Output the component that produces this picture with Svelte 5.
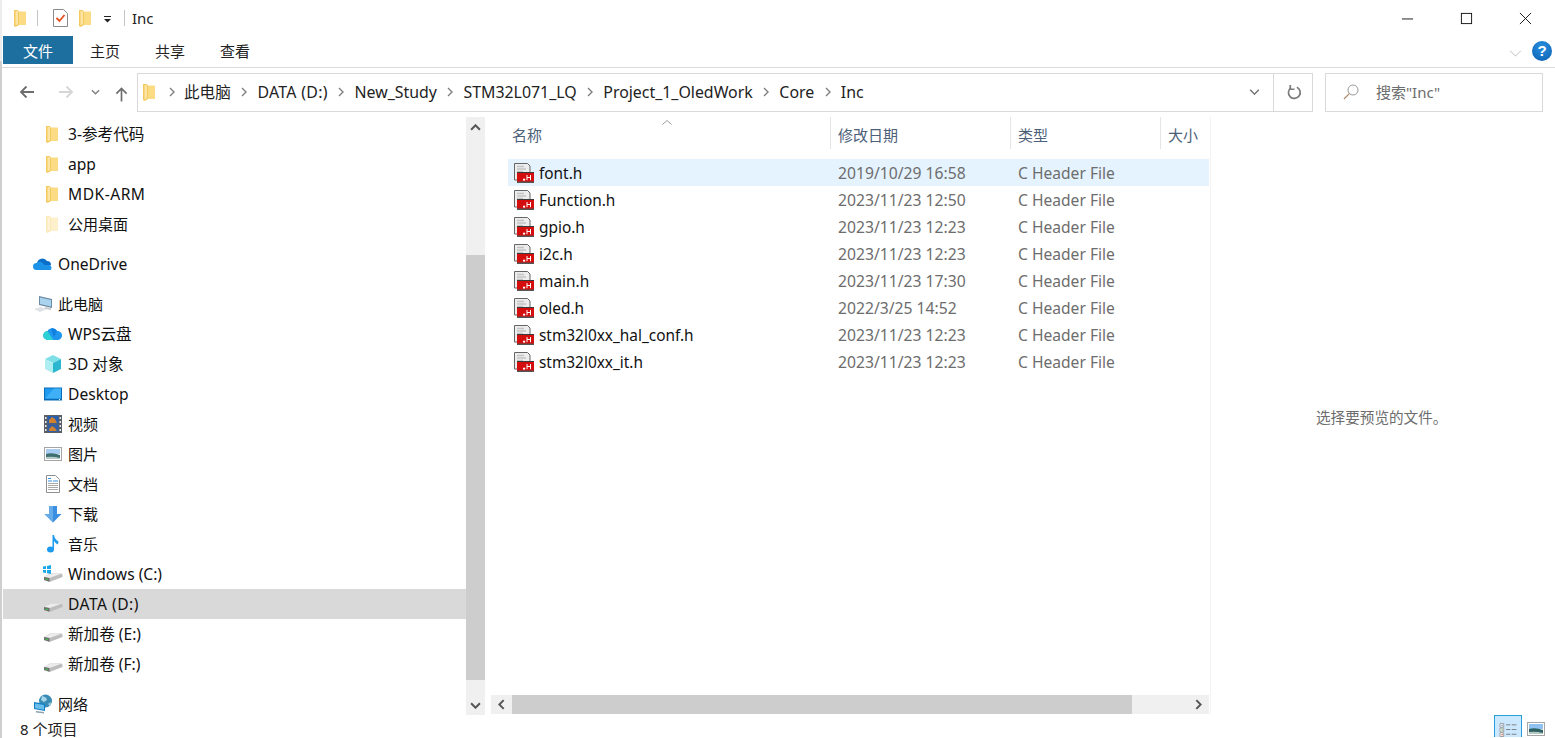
<script>
  const nav = [
    { t: '3-参考代码', i: 'folder', g: 'tree3' },
    { t: 'app', i: 'folder', g: 'tree3' },
    { t: 'MDK-ARM', i: 'folder', g: 'tree3' },
    { t: '公用桌面', i: 'folderPale', g: 'tree3' },
    { t: 'OneDrive', i: 'onedrive', g: 'top', gap: 10 },
    { t: '此电脑', i: 'pc', g: 'top', gap: 10 },
    { t: 'WPS云盘', i: 'wps', g: 'tree3' },
    { t: '3D 对象', i: 'cube', g: 'tree3' },
    { t: 'Desktop', i: 'desktop', g: 'tree3' },
    { t: '视频', i: 'video', g: 'tree3' },
    { t: '图片', i: 'picture', g: 'tree3' },
    { t: '文档', i: 'doc', g: 'tree3' },
    { t: '下载', i: 'download', g: 'tree3' },
    { t: '音乐', i: 'music', g: 'tree3' },
    { t: 'Windows (C:)', i: 'win', g: 'tree3' },
    { t: 'DATA (D:)', i: 'drive', g: 'tree3', sel: true },
    { t: '新加卷 (E:)', i: 'drive', g: 'tree3' },
    { t: '新加卷 (F:)', i: 'drive', g: 'tree3' },
    { t: '网络', i: 'net', g: 'top', gap: 10 }
  ];
  const files = [
    ['font.h', '2019/10/29 16:58'],
    ['Function.h', '2023/11/23 12:50'],
    ['gpio.h', '2023/11/23 12:23'],
    ['i2c.h', '2023/11/23 12:23'],
    ['main.h', '2023/11/23 17:30'],
    ['oled.h', '2022/3/25 14:52'],
    ['stm32l0xx_hal_conf.h', '2023/11/23 12:23'],
    ['stm32l0xx_it.h', '2023/11/23 12:23']
  ];
  const crumbs = ['此电脑', 'DATA (D:)', 'New_Study', 'STM32L071_LQ', 'Project_1_OledWork', 'Core', 'Inc'];
  const isCjk = (s) => /^[^\x00-\x7f]+$/.test(s);
  const hasCjk = (s) => /[^\x00-\x7f]/.test(s);
  const isWide = (s) => s === 'DATA (D:)' || s === 'MDK-ARM';
</script>

{#snippet folder(pale)}
  <svg class="ic16" viewBox="0 0 12 17" aria-hidden="true">
    <path d="M3 1.500h9V15H3z" fill={pale ? '#fdf0cb' : '#fbdc85'} />
    <path d="M0 0h3.500L5 1.500V15l-3.500 2L0 16z" fill={pale ? '#fbe8b8' : '#f4c95d'} />
    <path d="M1.500 1h2l.5.5V14l-2.500 1.500z" fill={pale ? '#fef3d6' : '#fde6a5'} />
  </svg>
{/snippet}

{#snippet icon(n)}
  {#if n === 'folder'}{@render folder(false)}
  {:else if n === 'folderPale'}{@render folder(true)}
  {:else if n === 'onedrive'}
    <svg class="ic20" viewBox="0 0 20 14" aria-hidden="true">
      <path d="M4 6a5.500 5.500 0 0 1 10-2 4 4 0 0 1 4 4l-9 3z" fill="#0b6fc9" />
      <path d="M3.500 13a3.500 3.500 0 0 1 0-7 5 5 0 0 1 5-1l3 3 5 0a3 3 0 0 1 1 5z" fill="#1d93e8" />
    </svg>
  {:else if n === 'pc'}
    <svg class="ic20" viewBox="0 0 20 20" aria-hidden="true">
      <path d="M6 2l13 3v9L6 11z" fill="#6c8ba5" />
      <path d="M7 3.500l11 2.500v6.500L7 10z" fill="#a9d3ee" />
      <path d="M1 15l7-2 6 2-7 3z" fill="#dfe2e6" />
      <path d="M12 13l6 1v2l-6-1z" fill="#c8ccd1" />
    </svg>
  {:else if n === 'wps'}
    <svg class="ic20" viewBox="0 0 20 14" aria-hidden="true">
      <path d="M5 13a4.500 4.500 0 0 1-.5-9A5.500 5.500 0 0 1 14 4a4.500 4.500 0 0 1 1 9z" fill="#1f95ee" />
      <path d="M5 13a4.500 4.500 0 0 1-.5-9l6 9z" fill="#2cd0d5" />
      <path d="M8 1.500a5.500 5.500 0 0 1 6 2.500l-3 6z" fill="#0f7fe0" />
    </svg>
  {:else if n === 'cube'}
    <svg class="ic18" viewBox="0 0 18 18" aria-hidden="true">
      <path d="M9 0l8 4-8 4-8-4z" fill="#7fdfe6" />
      <path d="M1 4l8 4v10l-8-4z" fill="#aeeef0" />
      <path d="M17 4L9 8v10l8-4z" fill="#2ab7cf" />
    </svg>
  {:else if n === 'desktop'}
    <svg class="ic18" viewBox="0 0 18 13" aria-hidden="true">
      <rect width="18" height="13" fill="#0a6cb8" />
      <rect x="1" y="1" width="16" height="10" fill="#1f9bf0" />
      <path d="M1 11l9-10h7v10z" fill="#3fb0f7" />
      <rect x="15" y="11.500" width="1" height="1" fill="#fff" />
    </svg>
  {:else if n === 'video'}
    <svg class="ic18" viewBox="0 0 18 18" aria-hidden="true">
      <rect width="18" height="18" fill="#5a5f66" />
      <rect x="3.500" y="1" width="11" height="7.500" fill="#2a5fb0" />
      <rect x="3.500" y="9.500" width="11" height="7.500" fill="#3160a8" />
      <path d="M5 5l3-3 3 2 2 4H5zM5 14l3-3 3 2 2 3H5z" fill="#d2802c" />
      <path d="M1 2h1.500v2H1zM1 6h1.500v2H1zM1 10h1.500v2H1zM1 14h1.500v2H1zM15.500 2H17v2h-1.500zM15.500 6H17v2h-1.500zM15.500 10H17v2h-1.500zM15.500 14H17v2h-1.500z" fill="#e8e8e8" />
    </svg>
  {:else if n === 'picture'}
    <svg class="ic18" viewBox="0 0 18 14" aria-hidden="true">
      <rect x=".5" y=".5" width="17" height="13" fill="#fff" stroke="#a5a5a5" />
      <path d="M2 2h14v5H2z" fill="#a8cdf0" />
      <path d="M2 7q6-2 14 1v4H2z" fill="#3f7071" />
      <path d="M2 10q7-1 14 1v1H2z" fill="#b5c9c5" />
    </svg>
  {:else if n === 'doc'}
    <svg class="ic18" viewBox="0 0 18 18" aria-hidden="true">
      <path d="M2.500.5h9l4 4v13h-13z" fill="#fff" stroke="#8f8f8f" />
      <path d="M4 6h4M4 3.500h3" stroke="#2f8ee0" stroke-width="1" />
      <path d="M4 8.500h10M4 10.500h10M4 12.500h10M4 14.500h10" stroke="#a9a9a9" stroke-width="1" />
      <path d="M9 6h5" stroke="#2f8ee0" stroke-width="1" />
    </svg>
  {:else if n === 'download'}
    <svg class="ic18" viewBox="0 0 18 18" aria-hidden="true">
      <path d="M5 1h8v8h4.500L9 17.500.5 9H5z" fill="#3b8fe0" />
      <path d="M5 1h4v16.500L.5 9H5z" fill="#66ace9" />
    </svg>
  {:else if n === 'music'}
    <svg class="ic18" viewBox="0 0 18 18" aria-hidden="true">
      <ellipse cx="6.500" cy="14.500" rx="3.500" ry="3" fill="#1e9bf0" />
      <path d="M8.500 0h1.500q.5 4 4.500 6.500 0 2-1 3-2.500-2-3.500-3.500v8.500H8.500z" fill="#1e9bf0" />
    </svg>
  {:else if n === 'win' || n === 'drive'}
    <svg class="ic20" viewBox="0 0 20 18" aria-hidden="true">
      <path d="M1 12l6-3.500h11.500q1 .5 1 1.500v2l-13 5L1 15z" fill="#bdbdbd" />
      <path d="M1 12L7.500 8.500h11.500L6.500 13z" fill="#ececec" />
      <path d="M1 12l5.500 1v3.800L1 15z" fill="#6f6f6f" />
      <path d="M2.500 13.500l2.500.5v1.200l-2.500-.5z" fill="#3fc04a" />
      {#if n === 'win'}
        <path d="M0 1.500l3-.5v3H0zM4 .9L8 0v4H4zM0 5h3v3l-3-.5zM4 5h4v4l-4-.8z" fill="#1aa7ec" />
      {/if}
    </svg>
  {:else if n === 'net'}
    <svg class="ic20" viewBox="0 0 20 20" aria-hidden="true">
      <circle cx="12.500" cy="7" r="6.500" fill="#3a8cb5" />
      <path d="M9 2q5 1 5 4l-3 2-3-2zM15 10l3-2-1 4z" fill="#a6d4e8" />
      <path d="M1 8l11 2v7l-11-2z" fill="#0e7ec9" />
      <path d="M2 9.500l9 1.600v4.700l-9-1.600z" fill="#6bbdea" />
      <path d="M3 17l8 1v1.500l-8-1z" fill="#90a2ad" />
    </svg>
  {/if}
{/snippet}

{#snippet hfile()}
  <svg class="ic20" viewBox="0 0 20 20" aria-hidden="true">
    <path d="M.5.500h13l2.500 2.500v14H.5z" fill="#ededed" stroke="#666" />
    <path d="M3 3.500h7M3 6h9M3 8.500h6" stroke="#c4c4c4" stroke-width="1.500" />
    <rect x="3" y="9.500" width="17" height="9.500" fill="#d40d0d" />
    <rect x="3" y="9" width="17" height="1" fill="#3a3a3a" />
    <rect x="3" y="18.500" width="17" height="1.500" fill="#555" />
    <path d="M9.500 16h1.200v1.200H9.500zM13 12v5.200M16.500 12v5.200M13 14.500h3.500" stroke="#fff" stroke-width="1" fill="#fff" />
  </svg>
{/snippet}

<div class="win">
  <header class="title">
    <span class="qa first">{@render folder(false)}</span>
    <i class="qsep"></i>
    <svg class="props" viewBox="0 0 15 18" aria-hidden="true">
      <path d="M.5.500h10l4 4v13H.5z" fill="#fff" stroke="#8a8a8a" />
      <path d="M3.500 9l3 3 5-6" fill="none" stroke="#e5501b" stroke-width="1.800" />
    </svg>
    <span class="qa">{@render folder(false)}</span>
    <svg class="qdrop" viewBox="0 0 7 7" aria-hidden="true">
      <path d="M0 .5h7" stroke="#222" /><path d="M0 3h7L3.500 6.500z" fill="#222" />
    </svg>
    <i class="qsep two"></i>
    <span class="ttext">Inc</span>
    <div class="caps">
      <svg viewBox="0 0 14 14" aria-hidden="true"><path d="M1 7.500h12" stroke="#111" /></svg>
      <svg viewBox="0 0 14 14" aria-hidden="true"><rect x="1.500" y="1.500" width="11" height="11" fill="none" stroke="#111" /></svg>
      <svg viewBox="0 0 14 14" aria-hidden="true"><path d="M1 1l12 12M13 1L1 13" stroke="#111" fill="none" /></svg>
    </div>
  </header>

  <div class="tabs">
    <div class="tab file">文件</div>
    <div class="tab">主页</div>
    <div class="tab">共享</div>
    <div class="tab">查看</div>
    <svg class="collapse" viewBox="0 0 14 8" aria-hidden="true"><path d="M1 1l6 6 6-6" fill="none" stroke="#b5b5b5" stroke-width="1" /></svg>
    <span class="help">?</span>
  </div>

  <div class="navbar">
    <svg class="nb back" viewBox="0 0 16 14" aria-hidden="true"><path d="M15 7H2M7.500 1.500L2 7l5.500 5.500" fill="none" stroke="#6d6d6d" stroke-width="1.800" /></svg>
    <svg class="nb fwd" viewBox="0 0 16 14" aria-hidden="true"><path d="M1 7h13M8.500 1.500L14 7l-5.500 5.500" fill="none" stroke="#d6d6d6" stroke-width="1.800" /></svg>
    <svg class="nb down" viewBox="0 0 10 6" aria-hidden="true"><path d="M1 1l4 4 4-4" fill="none" stroke="#808080" stroke-width="1.600" /></svg>
    <svg class="nb up" viewBox="0 0 14 16" aria-hidden="true"><path d="M7 16V2M1.500 7.500L7 2l5.500 5.500" fill="none" stroke="#6d6d6d" stroke-width="1.800" /></svg>

    <div class="addr">
      <span class="afolder">{@render folder(false)}</span>
      {#each crumbs as c, i}
        <svg class="chev" class:firstchev={i === 0} viewBox="0 0 6 10" aria-hidden="true"><path d="M1 1l4 4-4 4" fill="none" stroke="#808080" stroke-width="1.400" /></svg>
        <span class="crumb" class:cjk={isCjk(c)} class:wide={isWide(c)}>{c}</span>
      {/each}
      <svg class="adrop" viewBox="0 0 12 7" aria-hidden="true"><path d="M1 1l5 5 5-5" fill="none" stroke="#6d6d6d" stroke-width="1.600" /></svg>
    </div>
    <div class="refresh">
      <svg viewBox="0 0 16 16" aria-hidden="true">
        <path d="M10.500 2.300A6.300 6.300 0 1 1 4 3" fill="none" stroke="#7a7a7a" stroke-width="1.800" />
        <path d="M3.500 0v4.500H8" fill="none" stroke="#7a7a7a" stroke-width="1.800" />
      </svg>
    </div>
    <div class="search">
      <svg viewBox="0 0 16 16" aria-hidden="true">
        <circle cx="10" cy="6" r="5" fill="none" stroke="#9a9a9a" stroke-width="1" />
        <path d="M6.300 9.700L1 15" stroke="#b08a6a" stroke-width="1.200" />
      </svg>
      <span>搜索"Inc"</span>
    </div>
  </div>

  <div class="main">
    <aside class="side">
      <div class="tree">
        {#each nav as n}
          <div class="row {n.g}" class:sel={n.sel} class:cjk={isCjk(n.t)} class:mixed={hasCjk(n.t)} class:wide={isWide(n.t)} style={n.gap ? `margin-top:${n.gap}px` : ''}>
            <span class="nicon">{@render icon(n.i)}</span>
            <span class="ntext">{n.t}</span>
          </div>
        {/each}
      </div>
      <div class="vbar">
        <svg class="end" viewBox="0 0 10 6" aria-hidden="true"><path d="M1 5l4-4 4 4" fill="none" stroke="#555" stroke-width="1.800" /></svg>
        <div class="vtrack"><div class="vthumb"></div></div>
        <svg class="end" viewBox="0 0 10 6" aria-hidden="true"><path d="M1 1l4 4 4-4" fill="none" stroke="#555" stroke-width="1.800" /></svg>
      </div>
    </aside>

    <section class="list">
      <div class="sort"><svg viewBox="0 0 10 5" aria-hidden="true"><path d="M.5 4.500L5 .5l4.500 4" fill="none" stroke="#999" /></svg></div>
      <div class="head">
        <div class="h c1">名称</div>
        <div class="h c2">修改日期</div>
        <div class="h c3">类型</div>
        <div class="h c4">大小</div>
      </div>
      <div class="rows">
        {#each files as f, i}
          <div class="frow" class:hot={i === 0}>
            <span class="fname">{@render hfile()}<b>{f[0]}</b></span>
            <span class="fdate">{f[1]}</span>
            <span class="ftype">C Header File</span>
          </div>
        {/each}
      </div>
      <div class="hbar">
        <svg class="hend" viewBox="0 0 6 10" aria-hidden="true"><path d="M5 1L1 5l4 4" fill="none" stroke="#555" stroke-width="1.800" /></svg>
        <div class="htrack"><div class="hthumb"></div></div>
        <svg class="hend" viewBox="0 0 6 10" aria-hidden="true"><path d="M1 1l4 4-4 4" fill="none" stroke="#555" stroke-width="1.800" /></svg>
      </div>
    </section>

    <div class="preview"><span>选择要预览的文件。</span></div>
  </div>

  <footer class="status">
    <span class="count">8 个项目</span>
    <div class="views">
      <div class="view on">
        <svg viewBox="0 0 18 17" aria-hidden="true">
          <path d="M.5 1.500h4v4h-4zM.5 6.500h4v4h-4zM.5 11.500h4v4h-4z" fill="#fff" stroke="#999" />
          <path d="M2 3h1.500v1H2z" fill="#3b7fc4" /><path d="M2 8h1.500v1H2z" fill="#3a9a4a" /><path d="M2 13h1.500v1H2z" fill="#c23b22" />
          <path d="M7 3h4.500M13 3h5M7 8h4.500M13 8h5M7 13h4.500M13 13h5" stroke="#7b7b7b" />
        </svg>
      </div>
      <div class="view">
        <svg viewBox="0 0 18 14" aria-hidden="true">
          <rect x=".5" y=".5" width="17" height="13" fill="#fff" stroke="#a5a5a5" />
          <path d="M2 2h14v5H2z" fill="#8fc2f0" />
          <path d="M2 7q6-2 14 1v4H2z" fill="#2f6263" />
          <path d="M2 10q7-1 14 1v1H2z" fill="#b5c9c5" />
        </svg>
      </div>
    </div>
  </footer>
</div>

<style>
  :global(body) { margin: 0; background: #fff; overflow: hidden; }
  .win {
    width: 1555px; height: 738px; overflow: hidden; display: flex; flex-direction: column;
    font-family: "Noto Sans", "Noto Sans CJK SC", sans-serif; font-size: 15.600px; color: #111; background: #fff;
    box-sizing: border-box; border-left: 2px solid #cfcfcf; border-image: linear-gradient(#ececec 62px, #cfcfcf 62px) 1;
  }
  svg { display: block; flex: none; }
  i { display: block; flex: none; }
  .ic16 { width: 12px; height: 17px; }
  .ic20 { width: 20px; height: 20px; }
  .ic18 { width: 18px; height: 18px; }

  .title { height: 36px; display: flex; align-items: center; flex: none; }
  .qa { display: block; }
  .qa.first { margin-left: 12px; }
  .qsep { width: 1px; height: 16px; background: #c4c4c4; margin-left: 11px; }
  .qsep.two { margin-left: 13px; }
  .props { width: 15px; height: 18px; margin-left: 15px; }
  .title .qa:nth-of-type(2) { margin-left: 11px; }
  .qdrop { width: 7px; height: 7px; margin-left: 13px; margin-top: 2px; }
  .ttext { margin-left: 7px; font-size: 15px; color: #222; }
  .caps { margin-left: auto; display: flex; gap: 46px; margin-right: 23px; }
  .caps svg { width: 13px; height: 13px; }

  .tabs {
    height: 31px; display: flex; align-items: flex-start; flex: none; padding-left: 1px;
    border-bottom: 1px solid #dadbdc; box-sizing: content-box;
  }
  .tab { width: 65px; height: 28px; line-height: 31px; text-align: center; font-size: 15px; color: #222; }
  .tab.file { width: 70px; background: #1c6f9e; color: #fff; margin-right: -.5px; }
  .collapse { margin-left: auto; width: 13px; height: 7px; margin-top: 14px; }
  .help {
    width: 20px; height: 20px; border-radius: 50%; background: radial-gradient(circle at 50% 30%, #2a8fe0, #0a5fb0); color: #fff; font-weight: 700; font-size: 15px;
    line-height: 20px; text-align: center; margin: 5px 3px 0 10px; font-family: "Liberation Sans", sans-serif;
  }

  .navbar { height: 49px; flex: none; display: flex; align-items: center; padding-bottom: 6px; box-sizing: border-box; padding-top: 5px; }
  .nb.back { width: 16px; height: 14px; margin-left: 17px; }
  .nb.fwd { width: 16px; height: 14px; margin-left: 23px; }
  .nb.down { width: 9px; height: 6px; margin-left: 17px; }
  .nb.up { width: 13px; height: 16px; margin-left: 15px; margin-top: 3px; }
  .addr {
    margin-left: 9px; width: 1136px; height: 39px; box-sizing: border-box; border: 1px solid #d9d9d9; border-right: 0; display: flex; align-items: center;
    font-size: 15.900px; color: #222;
  }
  .afolder { margin-left: 5px; }
  .chev { width: 6px; height: 10px; margin: 0 10.300px; }
  .chev.firstchev { margin-left: 14px; margin-right: 9px; }
  .crumb { white-space: nowrap; }
  .crumb.cjk { font-size: 15.600px; padding-bottom: 2px; }
  .crumb.wide { letter-spacing: .3px; }
  .adrop { width: 11px; height: 6px; margin-left: auto; margin-right: 13px; }
  .refresh { width: 40px; height: 39px; box-sizing: border-box; border: 1px solid #d9d9d9; display: flex; align-items: center; justify-content: center; }
  .refresh svg { width: 15px; height: 15px; margin-left: 2px; }
  .search {
    margin-left: 12px; width: 218px; height: 39px; box-sizing: border-box; border: 1px solid #d9d9d9; display: flex; align-items: center;
    color: #6d6d6d; font-size: 15px;
  }
  .search span { padding-bottom: 2px; }
  .search svg { width: 16px; height: 16px; margin: 0 17px 0 17px; }

  .main { height: 598px; flex: none; display: flex; }
  .side { width: 482px; margin-left: 1px; display: flex; flex: none; }
  .tree { width: 463px; flex: none; padding-top: 2px; box-sizing: border-box; }
  .row { height: 30px; display: flex; align-items: center; white-space: nowrap; color: #111; }
  .row.cjk { font-size: 15px; }
  .row.mixed .ntext { padding-bottom: 2px; }
  .row.wide .ntext { letter-spacing: .5px; }
  .row.sel { background: #d9d9d9; }
  .row.tree3 .nicon { margin-left: 40px; width: 25px; }
  .row.top .nicon { margin-left: 30px; width: 25px; }
  .nicon { display: flex; align-items: center; justify-content: flex-start; }
  .tree3 .ic16 { margin-left: 3px; }
  .tree3 .ic18 { margin-left: 1px; }
  .vbar { width: 19px; background: #f0f0f0; display: flex; flex-direction: column; align-items: center; flex: none; }
  .end { width: 11px; height: 7px; margin: 7px 0 6px; }
  .vtrack { flex: 1; width: 100%; }
  .vthumb { margin-top: 118px; height: 425px; background: #cdcdcd; }

  .list { width: 720px; margin-left: 5px; border-right: 1px solid #f3f3f3; display: flex; flex-direction: column; flex: none; position: relative; box-sizing: content-box; }
  .sort { position: absolute; left: 172px; top: 3px; }
  .sort svg { width: 10px; height: 5px; }
  .head { height: 34px; display: flex; flex: none; color: #4c607a; font-size: 15px; }
  .h { height: 32px; line-height: 37px; box-sizing: border-box; padding-left: 7px; border-left: 1px solid #e5e5e5; }
  .c1 { width: 340px; border-left: 0; padding-left: 22px; }
  .c2 { width: 180px; }
  .c3 { width: 150px; }
  .c4 { width: 49px; overflow: hidden; white-space: nowrap; }
  .rows { flex: 1; padding: 8px 1px 0 18px; box-sizing: border-box; }
  .frow { height: 27px; display: flex; align-items: center; white-space: nowrap; }
  .frow.hot { background: #e5f3ff; }
  .fname { width: 330px; display: flex; align-items: center; padding-left: 6px; box-sizing: border-box; }
  .fname svg { margin-right: 5px; }
  .fname b { font-weight: 400; color: #111; font-size: 15.400px; padding-top: 2px; }
  .fdate { width: 180px; color: #6d6d6d; font-size: 15.700px; }
  .ftype { color: #6d6d6d; }
  .hbar { height: 19px; flex: none; margin: 0 1px 1px 1px; display: flex; align-items: center; background: #f0f0f0; }
  .hend { width: 7px; height: 11px; margin: 0 7px; }
  .htrack { flex: 1; height: 100%; }
  .hthumb { width: 620px; height: 100%; background: #cdcdcd; }

  .preview { flex: 1; color: #6d6d6d; font-size: 14.600px; padding: 289px 0 0 105px; box-sizing: border-box; white-space: nowrap; }

  .status { flex: 1; min-height: 0; display: flex; align-items: flex-start; }
  .count { margin-left: 18px; margin-top: 7px; font-size: 15px; line-height: 15px; color: #222; }
  .views { margin-left: auto; margin-right: 6px; display: flex; align-items: flex-start; }
  .view { width: 26px; height: 22px; box-sizing: border-box; display: flex; justify-content: center; padding-top: 6px; margin-left: 1px; }
  .view.on { width: 28px; background: #cce8ff; border: 1px solid #26a0da; border-bottom: 0; }
  .view svg { width: 18px; height: 16px; }
</style>
